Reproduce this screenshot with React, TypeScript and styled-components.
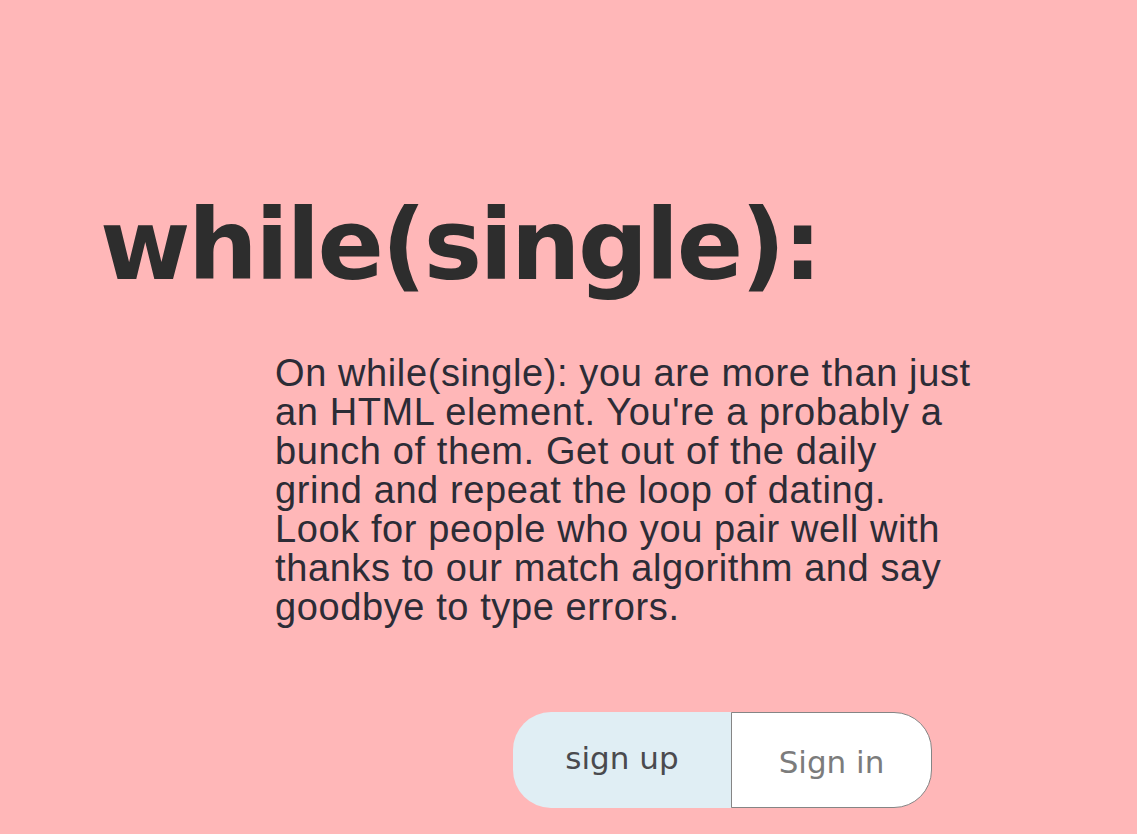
import React from "react";
import styled, { createGlobalStyle } from "styled-components";

const Global = createGlobalStyle`
  html, body { margin: 0; padding: 0; background: #ffb7b8; }
  body { font-family: "Liberation Sans", Arial, sans-serif; }
`;

const Page = styled.main`
  min-height: 834px;
  background: #ffb7b8;
  display: flex;
  flex-direction: column;
  padding: 180px 0 0 100px;
  box-sizing: border-box;
`;

const Title = styled.h1`
  margin: 0;
  font-family: "DejaVu Sans", "Lato", sans-serif;
  font-weight: 700;
  font-size: 98px;
  line-height: 130px;
  letter-spacing: -2.5px;
  color: #2d2d2d;
`;

const Blurb = styled.p`
  margin: 44px 0 0 175px;
  width: 697px;
  font-family: "Liberation Sans", Arial, sans-serif;
  font-size: 38px;
  line-height: 39px;
  letter-spacing: 0.6px;
  color: #2c2c36;
`;

const Actions = styled.div`
  display: flex;
  margin: 85px 0 0 413px;
`;

const Btn = styled.button<{ $variant: "up" | "in" }>`
  box-sizing: border-box;
  width: ${(p) => (p.$variant === "up" ? "218px" : "201px")};
  height: 96px;
  font-family: "DejaVu Sans", "Open Sans", sans-serif;
  font-size: 31px;
  font-weight: 400;
  cursor: pointer;
  border: ${(p) => (p.$variant === "up" ? "none" : "1px solid #858585")};
  border-radius: ${(p) => (p.$variant === "up" ? "38px 0 0 38px" : "0 38px 38px 0")};
  background: ${(p) => (p.$variant === "up" ? "#e0eef4" : "#ffffff")};
  color: ${(p) => (p.$variant === "up" ? "#4a4a4e" : "#7c7c7c")};
  padding: ${(p) => (p.$variant === "up" ? "0 0 4px" : "4px 0 0")};
`;

export default function App() {
  return (
    <>
      <Global />
      <Page>
        <Title>while(single):</Title>
        <Blurb>
          On while(single): you are more than just an HTML element. You're a probably a bunch of
          them. Get out of the daily grind and repeat the loop of dating. Look for people who you
          pair well with thanks to our match algorithm and say goodbye to type errors.
        </Blurb>
        <Actions>
          <Btn $variant="up">sign up</Btn>
          <Btn $variant="in">Sign in</Btn>
        </Actions>
      </Page>
    </>
  );
}
